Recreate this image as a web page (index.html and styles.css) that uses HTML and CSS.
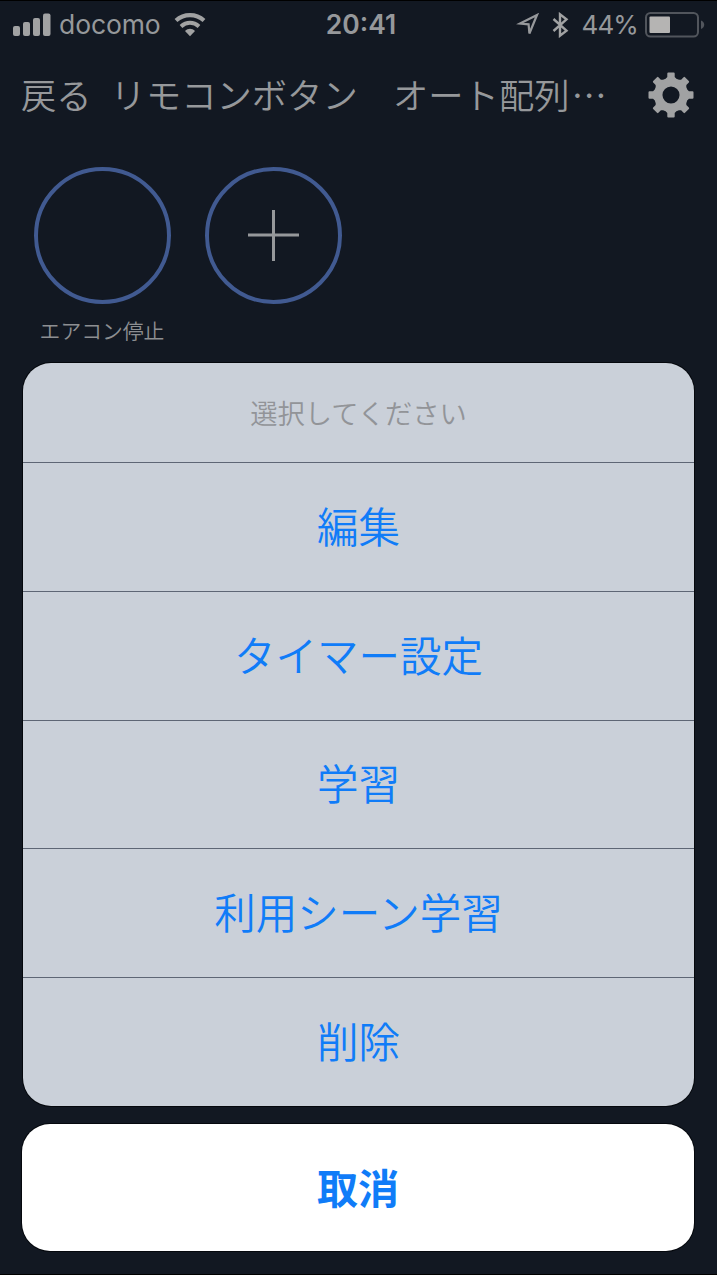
FILE: index.html
```html
<!DOCTYPE html>
<html lang="ja">
<head>
    <meta charset="UTF-8">
    <meta name="viewport" content="width=device-width, initial-scale=1.0">
    <title>リモコンボタン</title>
    <link rel="stylesheet" href="styles.css">
</head>
<body>
    <div class="status-bar">
        <div class="status-left">
            <svg class="signal" width="38" height="24" viewBox="0 0 38 24">
                <rect x="0" y="13" width="7" height="10" rx="2"/>
                <rect x="10" y="9" width="7" height="14" rx="2"/>
                <rect x="20" y="5" width="7" height="18" rx="2"/>
                <rect x="30" y="0.5" width="7.5" height="22.5" rx="2"/>
            </svg>
            <span class="carrier">docomo</span>
            <svg class="wifi" width="32" height="24" viewBox="0 0 32 24">
                <path d="M2 7.5C10 .3 22 .3 30 7.5" stroke-width="4.2"/>
                <path d="M7 13.4c5.4-4.8 12.6-4.8 18 0" stroke-width="4"/>
                <path class="fill" d="M11 18c3-3 7-3 10 0l-5 5.2z"/>
            </svg>
        </div>
        <span class="clock">20:41</span>
        <div class="status-right">
            <svg class="location" width="24" height="24" viewBox="0 0 24 24">
                <path d="M21 2L4 10.5l8.600.8.8 9.200z"/>
            </svg>
            <svg class="bluetooth" width="17" height="26" viewBox="0 0 17 26">
                <path d="M1.500 7l13 11.700-6.500 5V2.300l6.500 5L1.500 19"/>
            </svg>
            <span class="percent">44%</span>
            <svg class="battery" width="60" height="26" viewBox="0 0 60 26">
                <rect class="case" x="1" y="1" width="52" height="23.5" rx="4.5"/>
                <rect class="level" x="4.5" y="4.5" width="20.5" height="16.5" rx="1"/>
                <path class="cap" d="M56 8.500c4.300 1.500 4.300 7 0 8.500z"/>
            </svg>
        </div>
    </div>

    <div class="nav-bar">
        <a class="back">戻る</a>
        <h1 class="page-title">リモコンボタン　オート配列<span class="dots">…</span></h1>
        <svg class="gear" width="46" height="46" viewBox="-23 -23 46 46">
            <circle r="12.8"/>
            <g class="teeth">
                <path id="tooth" d="M-6.500-15L-3.700-18v-3.500q0-1 1-1h5.400q1 0 1 1v3.500L6.500-15z"/>
                <use href="#tooth" transform="rotate(45)"/>
                <use href="#tooth" transform="rotate(90)"/>
                <use href="#tooth" transform="rotate(135)"/>
                <use href="#tooth" transform="rotate(180)"/>
                <use href="#tooth" transform="rotate(225)"/>
                <use href="#tooth" transform="rotate(270)"/>
                <use href="#tooth" transform="rotate(315)"/>
            </g>
        </svg>
    </div>

    <div class="remote-buttons">
        <div class="remote-item">
            <div class="circle"></div>
            <span class="label">エアコン停止</span>
        </div>
        <div class="remote-item">
            <div class="circle">
                <svg width="53" height="53" viewBox="0 0 53 53">
                    <path d="M26.5 1v51M1 26h51"/>
                </svg>
            </div>
        </div>
    </div>

    <div class="action-sheet">
        <div class="sheet-title">選択してください</div>
        <button>編集</button>
        <button>タイマー設定</button>
        <button>学習</button>
        <button>利用シーン学習</button>
        <button>削除</button>
    </div>
    <button class="cancel">取消</button>
</body>
</html>
```
FILE: styles.css
```css
* {
    box-sizing: border-box;
}

body {
    margin: 0;
    height: 1275px;
    background-color: #121822;
    border-top: 1px solid #000;
    border-bottom: 1px solid #000;
    color: #96989b;
    font-family: "Noto Sans CJK JP", sans-serif;
    font-weight: 350;
    display: flex;
    flex-direction: column;
    overflow: hidden;
}

.status-bar {
    display: grid;
    grid-template-columns: 1fr auto 1fr;
    align-items: center;
    height: 47px;
    padding: 0 12px 0 13px;
    font-family: Inter, sans-serif;
    font-size: 26.5px;
    font-weight: 400;
    line-height: 1;
}

.status-left, .status-right {
    display: flex;
    align-items: center;
}

.status-right {
    justify-content: flex-end;
}

.signal {
    fill: #a1a2a3;
    margin-right: 8px;
}

.carrier {
    letter-spacing: -0.1px;
    margin-right: 13px;
}

.wifi {
    fill: none;
    stroke: #a1a2a3;
}

.wifi .fill {
    fill: #a1a2a3;
    stroke: none;
}

.clock {
    font-weight: 600;
    margin-left: 4px;
}

.location {
    fill: none;
    stroke: #96989b;
    stroke-width: 2.2;
    margin-right: 12px;
}

.bluetooth {
    fill: none;
    stroke: #a1a2a3;
    stroke-width: 2.4;
    margin-right: 13px;
}

.percent {
    letter-spacing: -0.9px;
    margin-right: 7px;
    font-size: 26px;
}

.battery .case {
    fill: none;
    stroke: #51555c;
    stroke-width: 2;
}

.battery .level {
    fill: #b5b4b3;
}

.battery .cap {
    fill: #51555c;
}

.nav-bar {
    display: flex;
    align-items: center;
    height: 94px;
    padding: 0 23px 0 21px;
    font-size: 35.3px;
    line-height: 50px;
    white-space: nowrap;
}

.back, .page-title {
    padding-bottom: 2px;
}

.page-title {
    flex: 1;
    margin: 0 0 0 19px;
    font-size: inherit;
    font-weight: inherit;
}

.dots {
    margin-left: 2px;
}

.gear circle {
    fill: none;
    stroke: #a1a2a3;
    stroke-width: 8.5;
}

.gear .teeth {
    fill: #a1a2a3;
}

.remote-buttons {
    display: flex;
    gap: 34px;
    height: 221px;
    padding: 25px 33.5px 0;
}

.remote-item {
    width: 137px;
    text-align: center;
}

.circle {
    display: flex;
    align-items: center;
    justify-content: center;
    height: 137px;
    border: 4px solid #415a91;
    border-radius: 50%;
}

.circle path {
    stroke: #96989b;
    stroke-width: 3;
}

.label {
    display: block;
    margin-top: 11px;
    color: #8d8f92;
    font-size: 20.8px;
    line-height: 30px;
    white-space: nowrap;
}

.action-sheet {
    display: flex;
    flex-direction: column;
    height: 743px;
    margin: 0 23px 18px;
    background-color: #cad0d9;
    border-radius: 28px;
    box-shadow: 0 0 0 1px #05080d;
    overflow: hidden;
}

.sheet-title {
    height: 99px;
    color: #929498;
    font-size: 27.3px;
    line-height: 98px;
    text-align: center;
}

button {
    flex: 1;
    padding: 0 0 4px;
    border: none;
    background: none;
    color: #107cf8;
    font-family: inherit;
    font-size: 41.5px;
    font-weight: inherit;
    line-height: 60px;
}

.action-sheet button {
    border-top: 1px solid #5e6675;
}

.cancel {
    flex: none;
    height: 127px;
    margin: 0 23px 0 22px;
    background-color: #fff;
    border-radius: 28px;
    box-shadow: 0 0 0 1px #05080d;
    font-size: 41px;
    font-weight: 700;
}
```
